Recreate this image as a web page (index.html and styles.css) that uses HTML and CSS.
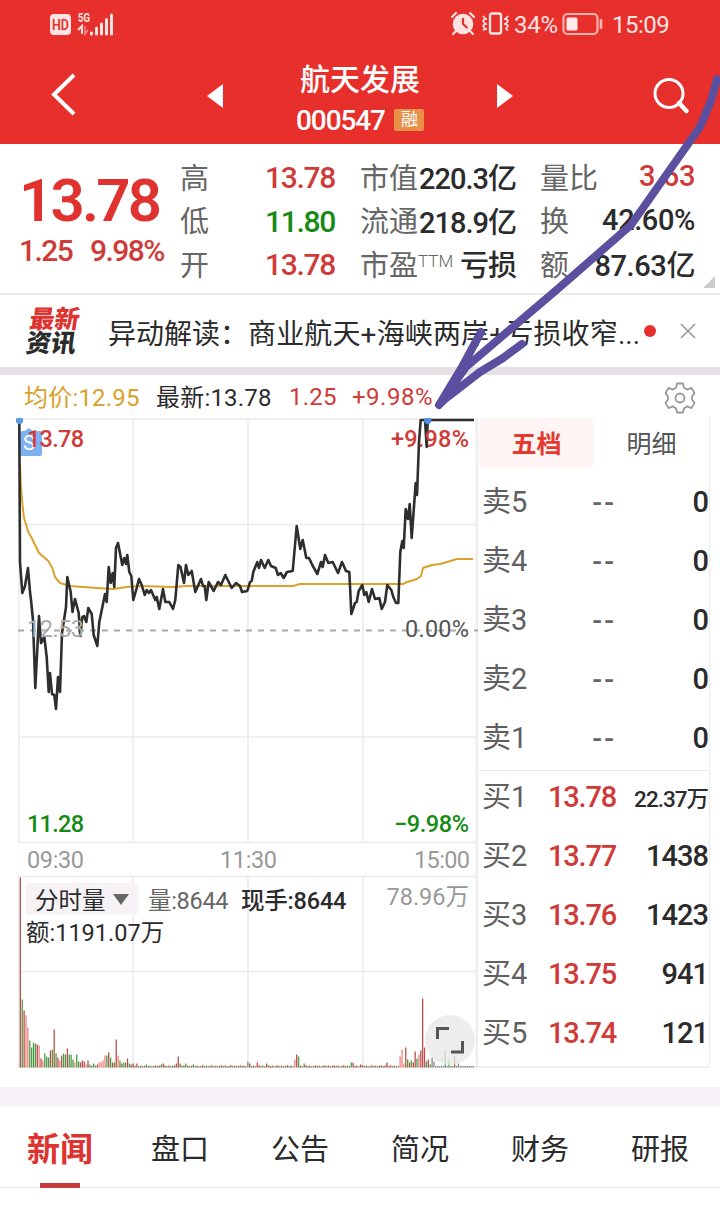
FILE: index.html
```html
<!DOCTYPE html>
<html lang="zh-CN">
<head>
    <meta charset="UTF-8">
    <meta name="viewport" content="width=device-width, initial-scale=1.0">
    <title>航天发展 000547</title>
    <link rel="stylesheet" href="styles.css">
</head>
<body>
    <div class="app">
        <header class="header">
            <div class="status-bar">
                <svg class="status-left" width="70" height="30" viewBox="0 0 70 30">
                    <rect x="0" y="5" width="21" height="21" rx="4" fill="#ffe3e3"/>
                    <text x="2" y="20.500" font-size="14" font-weight="600" textLength="17" lengthAdjust="spacingAndGlyphs" fill="#e72f2c">HD</text>
                    <text x="28" y="13" font-size="12" font-weight="700" textLength="12" lengthAdjust="spacingAndGlyphs" fill="#ffe3e3">5G</text>
                    <path d="M28 21l4-4v8" fill="none" stroke="#ffe3e3" stroke-width="2"/>
                    <path d="M35 17v8l3-4" fill="none" stroke="#f38b89" stroke-width="1.5"/>
                    <path d="M41.500 25v-1M46.500 25v-6M51.500 25v-10M56.500 25v-14.500M61.500 25v-19" stroke="#ffe3e3" stroke-width="3" stroke-linecap="round"/>
                </svg>
                <div class="status-right">
                    <svg width="60" height="26" viewBox="0 0 60 26" fill="none" stroke="#ffe3e3">
                        <circle cx="13" cy="13" r="10.3" fill="#ffe3e3" stroke="none"/>
                        <path d="M2 6l4-4M24 6l-4-4M6 20l-3 3M20 20l3 3" stroke-width="2.2" stroke-linecap="round"/>
                        <path d="M13 7v6l4.5 4" stroke="#e72f2c" stroke-width="2.2"/>
                        <rect x="40" y="2.5" width="11" height="20" rx="2" stroke-width="2.4"/>
                        <path d="M33 5l2 2.5-2 2.5 2 2.5-2 2.5 2 2.5-2 2M36 7v2M36 12v2M36 17v2M58 5l-2 2.5 2 2.5-2 2.5 2 2.5-2 2.5 2 2M55 7v2M55 12v2" stroke-width="1.7"/>
                    </svg>
                    <span class="battery-level">34%</span>
                    <svg width="42" height="24" viewBox="0 0 42 24">
                        <rect x="1.5" y="2" width="34" height="20" rx="4" fill="none" stroke="#ffb4b2" stroke-width="2.2"/>
                        <rect x="4.5" y="5.5" width="11" height="13" rx="1.5" fill="#ffe9e9"/>
                        <path d="M39 8v8" stroke="#ffb4b2" stroke-width="2.6" stroke-linecap="round"/>
                    </svg>
                    <span class="clock">15:09</span>
                </div>
            </div>
            <div class="nav">
                <svg class="back" width="26" height="44" viewBox="0 0 26 44"><path d="M23 3L3 22.500 23 42" fill="none" stroke="#fff" stroke-width="4"/></svg>
                <svg class="prev" width="16" height="24" viewBox="0 0 16 24"><path d="M16 0v24L0 12z" fill="#fff"/></svg>
                <div class="title">
                    <h1>航天发展</h1>
                    <div class="code"><span>000547</span><i>融</i></div>
                </div>
                <svg class="next" width="16" height="24" viewBox="0 0 16 24"><path d="M0 0v24l16-12z" fill="#fff"/></svg>
                <svg class="search" width="38" height="38" viewBox="0 0 38 38" fill="none" stroke="#fff"><circle cx="17" cy="16.500" r="14" stroke-width="3"/><path d="M27 26l7.500 8" stroke-width="4.5" stroke-linecap="round"/></svg>
            </div>
        </header>

        <section class="quote">
            <div class="price">
                <strong>13.78</strong>
                <div class="change"><span>1.25</span><span>9.98%</span></div>
            </div>
            <dl class="stats high-low">
                <div><dt>高</dt><dd class="up">13.78</dd></div>
                <div><dt>低</dt><dd class="down">11.80</dd></div>
                <div><dt>开</dt><dd class="up">13.78</dd></div>
            </dl>
            <dl class="stats cap">
                <div><dt>市值</dt><dd>220.3亿</dd></div>
                <div><dt>流通</dt><dd>218.9亿</dd></div>
                <div><dt>市盈<sup>TTM</sup></dt><dd>亏损</dd></div>
            </dl>
            <dl class="stats turnover">
                <div><dt>量比</dt><dd class="up">3.63</dd></div>
                <div><dt>换</dt><dd>42.60%</dd></div>
                <div><dt>额</dt><dd>87.63亿</dd></div>
            </dl>
            <span class="corner"></span>
        </section>

        <section class="news">
            <div class="news-logo"><b>最新</b><b>资讯</b></div>
            <p>异动解读：<span>商业航天+海峡两岸+亏损收窄</span>...</p>
            <span class="dot"></span>
            <svg width="16" height="16" viewBox="0 0 16 16"><path d="M1 1l14 14M15 1L1 15" stroke="#999" stroke-width="1.6"/></svg>
        </section>

        <div class="legend">
            <span class="avg">均价:12.95</span>
            <span class="last">最新:13.78</span>
            <span class="diff">1.25</span>
            <span class="pct">+9.98%</span>
            <svg class="gear" width="32" height="32" viewBox="0 0 32 32" fill="none" stroke="#999" stroke-width="1.8" stroke-linejoin="round">
                <path d="M13 1.500h6l1 4.200 3.300 1.900 4.200-1.700 3 5.200-2.500 3.400v3l2.500 3.400-3 5.200-4.200-1.700-3.300 1.900-1 4.200h-6l-1-4.200-3.300-1.900-4.200 1.700-3-5.200 2.500-3.400v-3l-2.500-3.400 3-5.200 4.200 1.700 3.300-1.900z"/>
                <circle cx="16" cy="16" r="4.500"/>
            </svg>
        </div>

        <main class="main">
            <div class="charts">
                <svg class="price-chart" width="478" height="457" viewBox="0 418 478 457">
                    <path class="grid" d="M18 419H478M18 524.500H478M18 737H478M18 842.500H478M19 419V843M133 419V843M248 419V843M363 419V843"/>
                    <path class="grid edge" d="M477 418V875"/>
                    <path d="M18 630.500H478" stroke="#aaa" stroke-width="2" stroke-dasharray="6 6"/>
                    <rect x="20" y="431" width="22" height="25" rx="2" fill="#7db1f2"/>
                    <path d="M23 432l6-4 5 4z" fill="#7db1f2"/>
                    <text x="23" y="450" font-size="20" fill="#fff">S</text>
                    <polyline class="avg-line" points="20,463 20.7,482 22.3,503 24,518 28.3,532 31.7,538 39,553 48.3,561 52.3,568 55,577 60,583 70,586 97,588 113,589 127,587 140,586 173,587 187,586 293,586 300,584 403,584 407,582 417,579 421,576 423,568 432,565 440,564 447,562 457,559 473,559"/>
                    <polyline class="price-line" points="19.3,420 20,562 22.3,593 25,586 28,568 30,592 31,600 33,620 35.3,688 39,616 41,643 44.3,637 46.7,657 48.7,692 50,673 52,694 54.3,695 56,709 58,677 60,692 62,633 66,607 67.3,577 70.7,592 72.5,612 75,599 78.7,613 80.3,636 82.3,617 84,616 86.3,622 88.3,608 91.7,614 93.7,635 97.3,646 99.3,622 105,594 106.7,602 108.7,567 110.7,583 112.7,573 114.3,587 116,548 118,543 122.3,565 124.3,558 126,564 127.3,555 129.3,572 131.3,576 133.3,600 136.7,588 139,579 141.7,585 144.7,595 146.700,590 149,593 151,590 155.3,600 156.700,597 159.3,609 163,589 165.3,602 169.3,602 173,609 175.3,600 178.3,565 180.5,567 184,583 186,565 188.3,575 191.700,571 195.3,592 201,579 203,586 204.700,586 206.3,600 208.700,582 213.700,591 218,582 221,585 225.3,575 231.700,588 236,583 240,586 242,592 247.3,591 250,582 251.700,581 253.3,572 257.3,562 259,568 261,560 264.700,568 268.3,560 271,566 275.700,568 278,575 280.700,573 283.700,578 287,572 292.700,571 296.700,526 300.3,549 302.700,540 306.3,558 309,558 312.3,565 317.3,574 321,562 322.700,567 325,555 328.3,563 332.700,562 338,573 342,562 346,571 349.3,572 350.3,592 351.3,614 355,603 356.700,602 358.700,591 362.3,585 364.3,595 366.3,592 368.700,602 372,589 375,599 379.3,598 381.700,609 385,602 387.3,585 391.3,590 393.3,597 396,603 398.3,603 400.3,552 402.3,541 403.700,548 405.700,509 408,519 409.700,504 411.700,538 415.700,483 417,495 419,442 420.700,420 425,420 426.700,447 427.700,420 474,420"/>
                    <circle cx="19.500" cy="420.500" r="3.600" fill="#5b9be0"/>
                    <circle cx="427.700" cy="420.500" r="3.600" fill="#4a90e2"/>
                    <text class="axis mid" x="27" y="636.500" textLength="57" fill="#aaa">12.53</text>
                    <text class="axis up" x="27" y="447" textLength="57">13.78</text>
                    <text class="axis up" x="391" y="447" textLength="78">+9.98%</text>
                    <text class="axis mid" x="405" y="636.500" textLength="64" fill="#555">0.00%</text>
                    <text class="axis down" x="27" y="831.500" textLength="57">11.28</text>
                    <text class="axis down" x="394" y="831.500" textLength="75">−9.98%</text>
                    <text class="axis time" x="27" y="868" textLength="57">09:30</text>
                    <text class="axis time" x="220" y="868" textLength="57">11:30</text>
                    <text class="axis time" x="414" y="868" textLength="56">15:00</text>
                </svg>
                <div class="volume">
                    <svg id="volumeChart" width="478" height="194" viewBox="0 0 478 194">
                        <path class="grid" d="M18 1.500H478M18 96.500H478M18 192H478M19 1V193M133 1V193M248 1V193M363 1V193"/>
                        <path class="grid edge" d="M477 0V193"/>
                        <g id="bars"></g>
                    </svg>
                    <div class="volume-info">
                        <span class="picker">分时量<i></i></span>
                        <span class="vol">量:8644</span>
                        <span class="hand">现手:8644</span>
                        <span class="max">78.96万</span>
                        <div class="amount">额:1191.07万</div>
                    </div>
                    <button class="expand"><svg width="30" height="30" viewBox="0 0 30 30"><path d="M2.500 14V3.500H14M27.500 16v11H16" fill="none" stroke="#555" stroke-width="3"/></svg></button>
                </div>
            </div>

            <aside class="book">
                <div class="book-tabs"><span class="active">五档</span><span>明细</span></div>
                <ul class="sell">
                    <li><span>卖5</span><em>--</em><b>0</b></li>
                    <li><span>卖4</span><em>--</em><b>0</b></li>
                    <li><span>卖3</span><em>--</em><b>0</b></li>
                    <li><span>卖2</span><em>--</em><b>0</b></li>
                    <li><span>卖1</span><em>--</em><b>0</b></li>
                </ul>
                <ul class="buy">
                    <li><span>买1</span><em>13.78</em><b class="small">22.37万</b></li>
                    <li><span>买2</span><em>13.77</em><b>1438</b></li>
                    <li><span>买3</span><em>13.76</em><b>1423</b></li>
                    <li><span>买4</span><em>13.75</em><b>941</b></li>
                    <li><span>买5</span><em>13.74</em><b>121</b></li>
                </ul>
            </aside>
        </main>

        <nav class="tabs">
            <a class="active">新闻</a>
            <a>盘口</a>
            <a>公告</a>
            <a>简况</a>
            <a>财务</a>
            <a>研报</a>
        </nav>

        <!-- hand-drawn arrow over the page -->
        <svg class="arrow" width="720" height="420" viewBox="0 0 720 420">
            <path d="M717 79L711 101L700 127L631 225L560 287L466 367L439 405L462 367L481 332M522 344L503 358L480 372L445 399L439 405"/>
        </svg>
    </div>
    <script src="chart.js"></script>
</body>
</html>
```
FILE: styles.css
```css
* {
    box-sizing: border-box;
    margin: 0;
    padding: 0;
}
body {
    font-family: Roboto, "Noto Sans CJK SC", sans-serif;
    background: #fff;
    color: #2b2b2b;
}
i, em {
    font-style: normal;
}
ul {
    list-style: none;
}
svg {
    display: block;
    flex: none;
}
.app {
    position: relative;
    width: 720px;
    height: 1213px;
    overflow: hidden;
    white-space: nowrap;
}
.up {
    color: #cf3b38;
    fill: #cf3b38;
}
.down {
    color: #158a15;
    fill: #158a15;
}

/* Header */
.header {
    height: 144px;
    background: #e72f2c;
    color: #fff;
}
.status-bar {
    display: flex;
    justify-content: space-between;
    align-items: center;
    height: 48px;
    padding: 0 51px 0 50px;
}
.status-left {
    margin-top: -1px;
}
.status-right {
    display: flex;
    align-items: center;
    color: #ffe3e3;
    font-size: 24px;
}
.battery-level {
    width: 43px;
    margin: 2px 5px 0 4px;
    letter-spacing: -0.3px;
}
.clock {
    width: 57px;
    margin: 2px 0 0 8px;
    letter-spacing: -0.5px;
}
.nav {
    display: flex;
    align-items: center;
    height: 96px;
    padding-left: 51px;
}
.back {
    margin-top: -4px;
}
.prev {
    margin-left: 140px;
    margin-left: 130px;
}
.title {
    width: 128px;
    margin: 0 73px 0 73px;
    text-align: center;
}
.title h1 {
    font-size: 30px;
    font-weight: 500;
    line-height: 40px;
    margin-top: 8px;
}
.code {
    display: flex;
    align-items: center;
    justify-content: space-between;
    height: 40px;
    font-size: 28px;
    font-weight: 500;
    letter-spacing: -1.1px;
}
.code i {
    width: 30px;
    height: 22px;
    border-radius: 2px;
    background: #e89048;
    font-size: 17px;
    font-weight: 400;
    line-height: 21px;
}
.search {
    margin-left: 139px;
}

/* Quote */
.quote {
    position: relative;
    display: flex;
    height: 151px;
    border-bottom: 2px solid #ebebeb;
}
.price {
    width: 180px;
    padding: 25px 0 0 19px;
    color: #e03330;
}
.price strong {
    display: block;
    font-size: 60px;
    font-weight: 600;
    line-height: 64px;
    letter-spacing: -2.8px;
}
.change {
    display: flex;
    gap: 18px;
    font-size: 30px;
    font-weight: 500;
    line-height: 36px;
    letter-spacing: -1.6px;
    color: #cf3b38;
}
.stats {
    padding-top: 12px;
}
.stats div {
    display: flex;
    justify-content: space-between;
    align-items: center;
    height: 43.500px;
}
.stats dt {
    padding-bottom: 4px;
    font-size: 29px;
    color: #666;
}
.stats dd {
    font-size: 30px;
    font-weight: 500;
    letter-spacing: -1.3px;
}
.high-low {
    width: 155px;
    margin-right: 25px;
}
.cap {
    width: 156px;
    margin-right: 24px;
}
.cap dd, .turnover dd {
    padding-bottom: 3px;
    font-size: 29px;
    letter-spacing: -1px;
}
.stats sup {
    font-size: 17px;
    font-weight: 300;
    vertical-align: 9px;
    line-height: 0;
}
.turnover {
    width: 155px;
}
.turnover dd {
    letter-spacing: -0.4px;
}
.corner {
    position: absolute;
    right: 5px;
    bottom: 5px;
    border: 6px solid #ccc;
    border-top-color: transparent;
    border-left-color: transparent;
}

/* News strip */
.news {
    display: flex;
    align-items: center;
    height: 80px;
    padding-left: 28px;
    border-bottom: 8px solid #e6e1e5;
}
.news-logo {
    width: 80px;
    padding-top: 2px;
    font-size: 25px;
    font-weight: 900;
    line-height: 24px;
    transform: skewX(-8deg);
}
.news-logo b {
    display: block;
    font-weight: 900;
}
.news-logo b:first-child {
    color: #dd3431;
}
.news p {
    width: 536px;
    padding-top: 2px;
    font-size: 28px;
}
.news p span {
    letter-spacing: 0.15px;
}
.dot {
    width: 12px;
    height: 12px;
    margin-right: 24px;
    border-radius: 50%;
    background: #e72f2c;
}

/* Legend */
.legend {
    display: flex;
    align-items: center;
    height: 43px;
    padding-left: 24px;
    font-size: 24px;
    letter-spacing: 0.2px;
}
.legend .avg {
    width: 132px;
    padding-bottom: 3px;
    color: #d9a02b;
}
.legend .last {
    width: 133px;
    padding-bottom: 3px;
}
.legend .diff {
    width: 63px;
    color: #cf3b38;
}
.legend .pct {
    width: 312px;
    letter-spacing: 0.5px;
    color: #cf3b38;
}
.legend .gear {
    margin-top: 3px;
}

/* Charts */
.main {
    display: flex;
    height: 669px;
}
.charts {
    width: 478px;
}
.grid {
    fill: none;
    stroke: #ebebeb;
    stroke-width: 1.6;
}
.grid.edge {
    stroke: #eee;
    stroke-width: 3;
}
.price-line, .avg-line {
    fill: none;
    stroke: #2e2e2e;
    stroke-width: 2.6;
    stroke-linejoin: round;
}
.avg-line {
    stroke: #daa12c;
    stroke-width: 2;
}
.axis {
    font-size: 23.500px;
    font-weight: 500;
}
.axis.mid {
    font-weight: 400;
}
.axis.time {
    font-weight: 400;
    fill: #999;
}
.volume {
    position: relative;
    height: 194px;
}
.volume-info {
    position: absolute;
    inset: 7px 9px auto 26px;
    display: flex;
    flex-wrap: wrap;
    align-items: center;
    font-size: 23.500px;
}
.picker {
    display: flex;
    align-items: center;
    justify-content: space-between;
    width: 112px;
    height: 32px;
    padding: 0 9px;
    border-radius: 4px;
    background: #f6f2f6;
}
.picker i {
    border: 8px solid transparent;
    border-top: 11px solid #666;
    border-bottom: 0;
}
.vol {
    margin-left: 10px;
    width: 84px;
    letter-spacing: -0.3px;
    color: #666;
}
.hand {
    margin-left: 9px;
    font-weight: 500;
    letter-spacing: -0.2px;
}
.max {
    margin: -8px 0 0 auto;
    color: #999;
}
.amount {
    width: 100%;
    line-height: 34px;
}
.expand {
    position: absolute;
    right: 3px;
    bottom: 4px;
    display: flex;
    align-items: center;
    justify-content: center;
    width: 50px;
    height: 50px;
    border: none;
    border-radius: 50%;
    background: rgba(232, 232, 232, 0.8);
}

/* Order book */
.book {
    width: 232px;
    height: 650px;
    border-right: 1px solid #ebebeb;
    border-bottom: 2px solid #f0f0f0;
}
.book-tabs {
    display: flex;
    height: 54px;
    padding-left: 1px;
    font-size: 25px;
    line-height: 54px;
    text-align: center;
    color: #555;
}
.book-tabs span {
    width: 115px;
    height: 50px;
}
.book-tabs .active {
    border-radius: 6px;
    background: #fff4f4;
    color: #e5392f;
    font-weight: 700;
}
.book li {
    display: flex;
    align-items: center;
    height: 59px;
    padding: 0 1px 0 4px;
    font-size: 29px;
}
.book li span {
    width: 64px;
    padding-bottom: 5px;
    color: #606060;
}
.book li em {
    width: 70px;
    text-align: right;
    font-weight: 500;
    letter-spacing: -1.2px;
    color: #666;
}
.book .sell em {
    padding-top: 2px;
    letter-spacing: 2px;
}
.book li b {
    flex: 1;
    text-align: right;
    font-weight: 500;
    letter-spacing: -1px;
}
.book li .small {
    font-size: 22.500px;
}
.sell {
    padding-bottom: 3px;
    border-bottom: 1px solid #ebebeb;
}
.buy {
    margin-top: -4px;
}
.book .buy em {
    color: #cf3b38;
}

/* Bottom tabs */
.tabs {
    display: flex;
    height: 101px;
    border-top: 20px solid #f6f2f7;
    border-bottom: 1px solid #ebebeb;
}
.tabs a {
    position: relative;
    width: 120px;
    text-align: center;
    font-size: 29px;
    line-height: 86px;
}
.tabs .active {
    color: #dd3431;
    font-size: 33px;
    font-weight: 700;
}
.tabs .active::after {
    content: "";
    position: absolute;
    left: 40px;
    bottom: -1px;
    width: 40px;
    height: 5px;
    background: #c93b3b;
}

.arrow {
    position: absolute;
    top: 0;
    left: 0;
    fill: none;
    stroke: #5b4f9f;
    stroke-width: 8;
    stroke-linecap: round;
    stroke-linejoin: round;
    pointer-events: none;
}
```
FILE: chart.js
```js
// volume bars: colour (r = up, g = down, k = flat) + height
const opening = "r190 g68 r57 p52 p40 g27 g20 g25 g24 r23 p22 r9 p7 g14 g11 g10 r17 g18 r38 g14 r10 p7 r12 g14 g13 r19 g13 g13 g8 p5 g13 g6 r5 r7 r6 p3 r7 g3 g2 g4 g2 r3 p5 p5 p7 p12 g12 r15 g10 r5 g5 r28 p12 g7 r4 g5 g5 r9 g4 r3 r4".split(" ");
const peaks = {
    62: "r4", 67: "g3", 75: "g3", 76: "r4", 83: "r4", 84: "r11", 85: "g4", 88: "g4", 92: "g3",
    121: "k6", 122: "r4", 126: "r5", 131: "r4", 146: "p8", 147: "r13", 148: "g11", 151: "g4",
    176: "g5", 177: "r5", 181: "r3", 195: "r5",
    202: "p11", 203: "p18", 204: "p4", 205: "r20", 206: "g8", 207: "r5", 208: "g7", 209: "r5",
    210: "r16", 211: "g9", 212: "p13", 213: "r17", 214: "r69", 215: "r20", 216: "g6", 217: "r8",
    218: "g3", 219: "k10", 220: "k6", 226: "g18", 228: "g8", 231: "r11", 233: "k4"
};
const colors = { r: "#b5504a", p: "#ee8580", g: "#4b9b45", k: "#888" };
const bars = document.getElementById("bars");

for (let i = 0; i < 242; i++) {
    let bar = opening[i] || peaks[i];
    if (!bar) {
        bar = i > 218 ? "k1.5" : (i % 3 ? "r" : "g") + (1.2 + (i * 7 % 5) * 0.25);
    }
    const h = parseFloat(bar.slice(1));
    const rect = document.createElementNS("http://www.w3.org/2000/svg", "rect");
    rect.setAttribute("x", 19.7 + i * 1.88);
    rect.setAttribute("y", 192.5 - h);
    rect.setAttribute("width", 1.3);
    rect.setAttribute("height", h);
    rect.setAttribute("fill", colors[bar[0]]);
    bars.appendChild(rect);
}
```
